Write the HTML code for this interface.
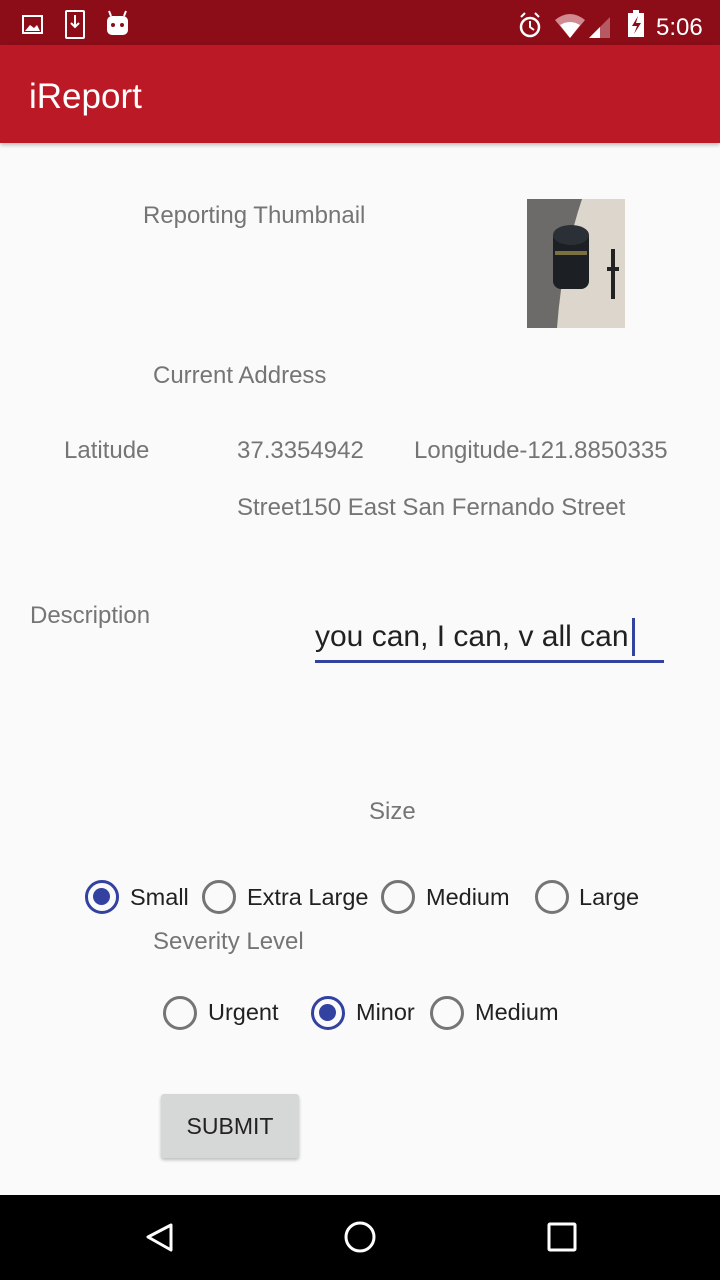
<!DOCTYPE html>
<html><head><meta charset="utf-8"><style>
*{margin:0;padding:0;box-sizing:border-box}
body{width:720px;height:1280px;position:relative;background:#fafafa;font-family:"Liberation Sans",sans-serif;overflow:hidden}
.a{position:absolute;white-space:nowrap;line-height:1}
.g{color:#757575;font-size:24px}
.k{color:#212121;font-size:23.5px}
.r{position:absolute;width:34px;height:34px;border-radius:50%;border:3.5px solid #757575}
.r.on{border-color:#3341a0}
.r.on::after{content:"";position:absolute;left:5px;top:5px;width:17px;height:17px;border-radius:50%;background:#3341a0}
</style></head><body>
<div class="a" style="left:0;top:0;width:720px;height:45px;background:#8c0d18"></div>
<svg class="a" style="left:0;top:0" width="720" height="45">
<rect x="23" y="16" width="19" height="17" fill="none" stroke="#fff" stroke-width="2"/>
<path d="M25 31 l5-6 4 3 3-3 3 6z" fill="#fff"/>
<rect x="66" y="11" width="18" height="27" rx="1" fill="none" stroke="#fff" stroke-width="2"/>
<path d="M75 15 v12 M71 23 l4 4 4-4" stroke="#fff" stroke-width="2" fill="none"/>
<rect x="107" y="16" width="21" height="19" rx="5" fill="#fff"/>
<path d="M111 16 l-2-5 M124 16 l2-5" stroke="#fff" stroke-width="2"/>
<circle cx="113" cy="25" r="2" fill="#8c0d18"/><circle cx="122" cy="25" r="2" fill="#8c0d18"/>
<circle cx="530" cy="27" r="9" fill="none" stroke="#fff" stroke-width="2.5"/>
<path d="M530 21 v6 l4 3 M521 17 l4-4 M539 17 l-4-4" stroke="#fff" stroke-width="2" fill="none"/>
<path d="M555 20 Q570 8 585 20 L570 38z" fill="#d08a90"/>
<path d="M560 25 Q570 19 580 25 L570 38z" fill="#fff"/>
<path d="M589 38 L610 17 V38z" fill="#b55a63"/><path d="M589 38 L600 27 V38z" fill="#fff"/>
<rect x="628" y="13" width="16" height="24" fill="#fff"/><rect x="633" y="10" width="6" height="4" fill="#fff"/>
<path d="M638 16 l-6 10 h5 l-3 8 7-11 h-5z" fill="#8c0d18"/>
<text x="656" y="35" fill="#fff" font-size="24" font-family="Liberation Sans">5:06</text>
</svg>
<div class="a" style="left:0;top:45px;width:720px;height:98px;background:#bc1927;box-shadow:0 2px 4px rgba(0,0,0,.25)"></div>
<div class="a" style="left:29px;top:79px;color:#fff;font-size:35px">iReport</div>

<div class="a g" style="left:143px;top:204px">Reporting Thumbnail</div>
<svg class="a" style="left:527px;top:199px" width="98" height="129">
<rect width="98" height="129" fill="#6d6b69"/>
<path d="M55 0 H98 V129 H30 Q35 60 55 0z" fill="#dcd6cc"/>
<rect x="26" y="30" width="36" height="60" rx="8" fill="#1c2024"/>
<ellipse cx="44" cy="36" rx="18" ry="10" fill="#2b3036"/>
<rect x="28" y="52" width="32" height="4" fill="#7a7040"/>
<path d="M86 50 V100 M80 70 h12" stroke="#222" stroke-width="4"/>
</svg>
<div class="a g" style="left:153px;top:364px">Current Address</div>
<div class="a g" style="left:64px;top:439px">Latitude</div>
<div class="a g" style="left:237px;top:439px">37.3354942</div>
<div class="a g" style="left:414px;top:439px">Longitude-121.8850335</div>
<div class="a g" style="left:237px;top:496px">Street150 East San Fernando Street</div>
<div class="a g" style="left:30px;top:604px">Description</div>
<div class="a" style="left:315px;top:622px;font-size:30px;color:#212121">you can, I can, v all can</div>
<div class="a" style="left:632px;top:618px;width:3px;height:38px;background:#3341a0"></div>
<div class="a" style="left:315px;top:660px;width:349px;height:3px;background:#3341a0"></div>

<div class="a g" style="left:369px;top:800px">Size</div>
<div class="r on" style="left:85px;top:880px"></div><div class="a k" style="left:130px;top:886px">Small</div>
<div class="r" style="left:202px;top:880px"></div><div class="a k" style="left:247px;top:886px">Extra Large</div>
<div class="r" style="left:381px;top:880px"></div><div class="a k" style="left:426px;top:886px">Medium</div>
<div class="r" style="left:535px;top:880px"></div><div class="a k" style="left:579px;top:886px">Large</div>
<div class="a g" style="left:153px;top:930px">Severity Level</div>
<div class="r" style="left:163px;top:996px"></div><div class="a k" style="left:208px;top:1001px">Urgent</div>
<div class="r on" style="left:311px;top:996px"></div><div class="a k" style="left:356px;top:1001px">Minor</div>
<div class="r" style="left:430px;top:996px"></div><div class="a k" style="left:475px;top:1001px">Medium</div>

<div class="a" style="left:161px;top:1094px;width:138px;height:64px;background:#d6d7d7;border-radius:3px;box-shadow:0 2px 3px rgba(0,0,0,.25);color:#222;font-size:23px;text-align:center;line-height:64px">SUBMIT</div>

<div class="a" style="left:0;top:1195px;width:720px;height:85px;background:#000"></div>
<svg class="a" style="left:0;top:1195px" width="720" height="85">
<path d="M171 30 L148 42 L171 55z" fill="none" stroke="#fff" stroke-width="3" stroke-linejoin="round"/>
<circle cx="360" cy="42" r="14" fill="none" stroke="#fff" stroke-width="3"/>
<rect x="549" y="29" width="26" height="26" rx="1" fill="none" stroke="#fff" stroke-width="3"/>
</svg>
</body></html>
